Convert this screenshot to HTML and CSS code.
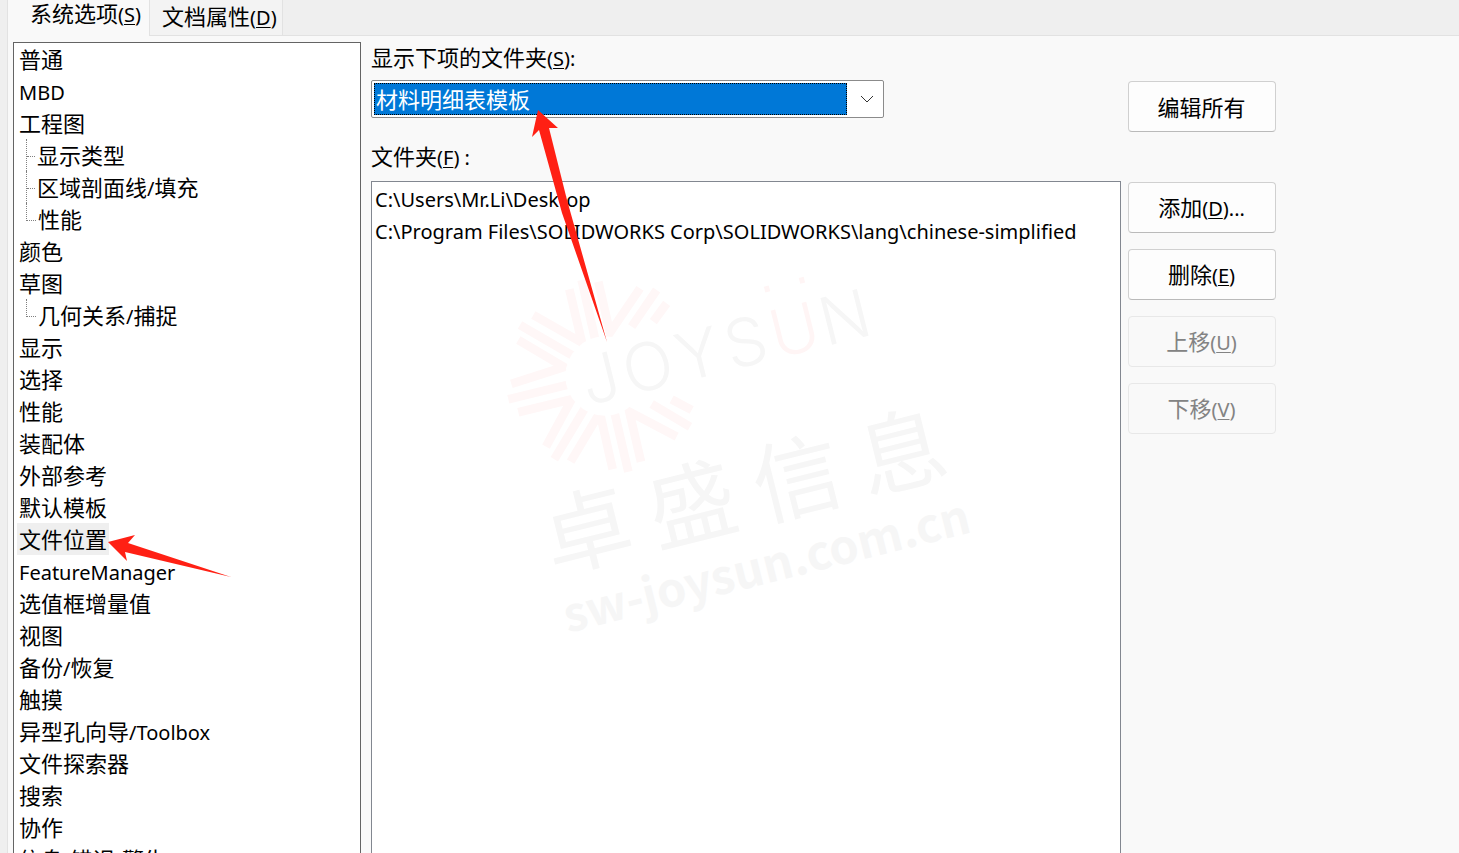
FILE: index.html
```
<!DOCTYPE html>
<html lang="zh-CN">
<head>
    <meta charset="UTF-8">
    <meta name="viewport" content="width=device-width, initial-scale=1.0">
    <title>系统选项</title>
    <link rel="stylesheet" href="styles.css">
</head>
<body>
    <div class="dialog">
        <div class="tabs" role="tablist">
            <button type="button" class="tab active" role="tab" aria-selected="true">系统选项<span class="en">(<u>S</u>)</span></button>
            <button type="button" class="tab" role="tab" aria-selected="false">文档属性<span class="en">(<u>D</u>)</span></button>
        </div>

        <div class="page">
            <ul class="tree">
                <li><button type="button">普通</button></li>
                <li><button type="button"><span class="en">MBD</span></button></li>
                <li>
                    <button type="button">工程图</button>
                    <ul class="branch">
                        <li><button type="button">显示类型</button></li>
                        <li><button type="button">区域剖面线<span class="en">/</span>填充</button></li>
                        <li><button type="button">性能</button></li>
                    </ul>
                </li>
                <li><button type="button">颜色</button></li>
                <li>
                    <button type="button">草图</button>
                    <ul class="branch">
                        <li><button type="button">几何关系<span class="en">/</span>捕捉</button></li>
                    </ul>
                </li>
                <li><button type="button">显示</button></li>
                <li><button type="button">选择</button></li>
                <li><button type="button">性能</button></li>
                <li><button type="button">装配体</button></li>
                <li><button type="button">外部参考</button></li>
                <li><button type="button">默认模板</button></li>
                <li><button type="button" class="selected">文件位置</button></li>
                <li><button type="button"><span class="en">FeatureManager</span></button></li>
                <li><button type="button">选值框增量值</button></li>
                <li><button type="button">视图</button></li>
                <li><button type="button">备份<span class="en">/</span>恢复</button></li>
                <li><button type="button">触摸</button></li>
                <li><button type="button">异型孔向导<span class="en">/Toolbox</span></button></li>
                <li><button type="button">文件探索器</button></li>
                <li><button type="button">搜索</button></li>
                <li><button type="button">协作</button></li>
                <li><button type="button">信息<span class="en">/</span>错误<span class="en">/</span>警告</button></li>
            </ul>

            <div class="folders">
                <label for="tipo">显示下项的文件夹<span class="en">(<u>S</u>):</span></label>
                <div class="combo">
                    <select id="tipo" name="tipo">
                        <option value="bom">材料明细表模板</option>
                    </select>
                    <svg class="chevron" viewBox="0 0 14 8" aria-hidden="true"><path d="M1 1l6 6 6-6"/></svg>
                </div>
                <label for="lista">文件夹<span class="en">(<u>F</u>) :</span></label>
                <select id="lista" class="list" name="lista" size="20">
                    <option>C:\Users\Mr.Li\Desktop</option>
                    <option>C:\Program Files\SOLIDWORKS Corp\SOLIDWORKS\lang\chinese-simplified</option>
                </select>
            </div>

            <div class="actions">
                <button type="button" class="btn edit">编辑所有</button>
                <button type="button" class="btn">添加<span class="en">(<u>D</u>)...</span></button>
                <button type="button" class="btn">删除<span class="en">(<u>E</u>)</span></button>
                <button type="button" class="btn" disabled>上移<span class="en">(<u>U</u>)</span></button>
                <button type="button" class="btn" disabled>下移<span class="en">(<u>V</u>)</span></button>
            </div>
        </div>
    </div>

    <svg class="marks" width="1459" height="853" viewBox="0 0 1459 853" aria-hidden="true">
        <!-- sun -->
        <g transform="translate(490 260) scale(0.3333)">
            <path class="rays" d="M238 88L276 248L130 165M90 195L250 288M85 240L222 321L64 372M55 418L235 374M85 457L245 418L168 560M193 598L290 436M242 605L319 476L330 460L368 628M415 635L373 455M453 605L418 455L560 530M600 500L485 432M605 450L545 418M275 60L316 240M325 65L360 218L450 85M500 90L425 200M530 130L490 185"/>
            <circle class="hole" cx="345" cy="348" r="119"/>
        </g>
        <g class="logo" transform="translate(603 402) rotate(-14)">
            <text x="3">J</text>
            <text x="52">O</text>
            <text x="104">Y</text>
            <text x="153">S</text>
            <text x="203" class="pink">U</text>
            <text x="255">N</text>
            <path class="pink" d="M184-73h5v6h-5zM220-73h5v6h-5z"/>
        </g>
        <g class="company" transform="translate(595 562) rotate(-14)">
            <text x="0">卓</text>
            <text x="108">盛</text>
            <text x="216">信</text>
            <text x="324">息</text>
        </g>
        <text class="site" transform="translate(568 633) rotate(-14)">sw-joysun.com.cn</text>
        <!-- arrows -->
        <path class="arrow" d="M538 110L558 128L549 128L567 200L607 342L562 213L539 130L532 137z"/>
        <path class="arrow" d="M108 542L135 535L128 543L231 577L125 552L127 561z"/>
    </svg>
</body>
</html>
```
FILE: styles.css
```
* {
    box-sizing: border-box;
}
body {
    margin: 0;
    height: 100vh;
    overflow: hidden;
    background-color: #efefef;
    font-family: "Noto Sans CJK SC", sans-serif;
    font-size: 22px;
    line-height: 32px;
    color: #000;
}
button, select {
    font: inherit;
    color: inherit;
    margin: 0;
}
button {
    border: none;
    background: none;
    white-space: nowrap;
}
ul {
    list-style: none;
    margin: 0;
    padding: 0;
}
u {
    text-decoration-thickness: 1px;
    text-underline-offset: 2px;
}
.en, .list {
    font-family: "Noto Sans", sans-serif;
    font-size: 20px;
}
.dialog {
    height: 100vh;
    margin-left: 7px;
    border-left: 1px solid #e2e2e2;
    display: flex;
    flex-direction: column;
}

/* tabs */
.tabs {
    display: flex;
    height: 36px;
    flex: none;
    box-shadow: inset 0 -1px #e2e2e2;
}
.tab {
    padding: 0 5px 2px 12px;
    border-right: 1px solid #e2e2e2;
    border-bottom: 1px solid #e2e2e2;
    background-color: #f3f3f3;
    line-height: 24px;
}
.tab.active {
    padding: 0 8px 9px 22px;
    border-bottom: none;
    background-color: #f9f9f9;
}

.page {
    flex: 1;
    min-height: 0;
    display: grid;
    grid-template-columns: 348px 1fr 148px;
    padding: 6px 183px 0 5px;
    background-color: #f9f9f9;
}

/* tree */
.tree {
    border: 1px solid #646464;
    border-bottom: none;
    padding-left: 3px;
    background-color: #fff;
    overflow: hidden;
}
.tree button {
    display: block;
    height: 32px;
    padding: 0 2px 2px;
    line-height: 30px;
}
.tree .selected {
    background-color: #efefef;
}
.branch {
    margin-left: 9px;
}
.branch li {
    display: flex;
    border-left: 1px dotted #808080;
}
.branch li::before {
    content: "";
    width: 8px;
    height: 17px;
    border-bottom: 1px dotted #808080;
}
.branch li:last-child {
    border-left: none;
}
.branch li:last-child::before {
    width: 9px;
    border-left: 1px dotted #808080;
}

/* folders */
.folders {
    display: flex;
    flex-direction: column;
    min-width: 0;
    margin: 0 7px 0 10px;
}
.folders label {
    height: 32px;
    line-height: 28px;
}
.combo {
    display: flex;
    align-items: center;
    width: 513px;
    height: 38px;
    margin: 6px 0 23px;
    padding: 2px 9px 2px 2px;
    border: 1px solid #8b8b8b;
    border-radius: 2px;
    background-color: #fff;
}
.combo select {
    appearance: none;
    flex: 1;
    height: 32px;
    margin-right: 13px;
    padding: 0 2px 3px 1px;
    border: 1px dotted #000;
    border-radius: 0;
    background-color: #0078d7;
    color: #fff;
    line-height: 28px;
}
.chevron {
    width: 14px;
    height: 8px;
    fill: none;
    stroke: #333;
}
.list {
    flex: 1;
    min-height: 0;
    margin-top: 8px;
    padding: 4px 3px;
    border: 1px solid #828790;
    border-bottom: none;
    border-radius: 0;
    background-color: #fff;
    overflow: hidden;
}
.list option {
    min-height: 32px;
    padding: 0;
    line-height: 32px;
}

/* buttons */
.actions {
    display: flex;
    flex-direction: column;
    gap: 16px;
    padding-top: 39px;
}
.btn {
    height: 51px;
    padding: 0 1px 1px 0;
    border: 1px solid #d0d0d0;
    border-bottom-color: #bababa;
    border-radius: 4px;
    background-color: #fdfdfd;
}
.btn.edit {
    margin-bottom: 34px;
}
.btn:disabled {
    border-color: #e8e8e8;
    background-color: #f9f9f9;
    color: #838383;
}

/* drawing over the page */
.marks {
    position: absolute;
    left: 0;
    top: 0;
    pointer-events: none;
    fill: #f6f6f6;
}
.rays {
    fill: none;
    stroke: #fff7f7;
    stroke-width: 26;
}
.hole {
    fill: #fff;
}
.logo, .company {
    text-anchor: middle;
}
.logo {
    font-family: Inter, sans-serif;
    font-size: 66px;
    font-weight: 300;
}
.pink {
    fill: #fff5f5;
}
.company {
    font-size: 88px;
}
.site {
    font-size: 47px;
    font-weight: 700;
}
.arrow {
    fill: #ff2014;
}
```
